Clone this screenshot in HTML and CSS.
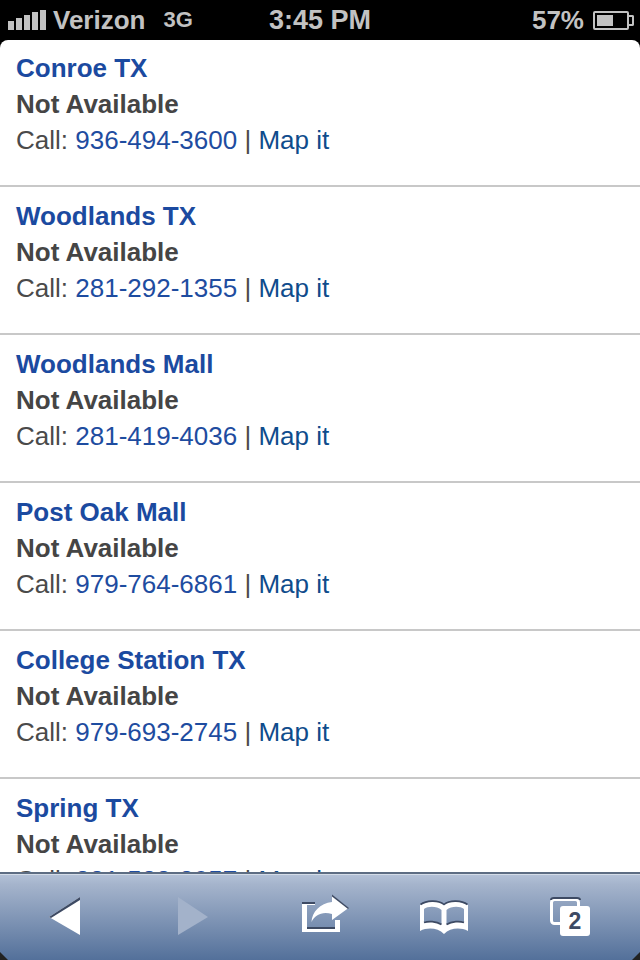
FILE: index.html
```html
<!DOCTYPE html>
<html lang="en">
<head>
  <meta charset="UTF-8" />
  <title>Store Locations</title>
  <link rel="stylesheet" href="styles.css">
</head>
<body>
  <div class="phone">
    <div class="status-bar">
      <div class="status-left">
        <div class="signal"><span class="b1"></span><span class="b2"></span><span class="b3"></span><span class="b4"></span><span class="b5"></span></div>
        <span class="carrier">Verizon</span>
        <span class="network">3G</span>
      </div>
      <div class="clock">3:45 PM</div>
      <div class="status-right">
        <span>57%</span>
        <div class="battery"><div class="battery-level"></div></div>
        <div class="battery-nub"></div>
      </div>
    </div>

    <div class="stores">
      <div class="store">
        <a class="store-name" href="#">Conroe TX</a>
        <div class="store-status">Not Available</div>
        <div class="store-call">Call: <a class="phone-link" href="#">936-494-3600</a> | <a class="map-link" href="#">Map it</a></div>
      </div>
      <div class="store">
        <a class="store-name" href="#">Woodlands TX</a>
        <div class="store-status">Not Available</div>
        <div class="store-call">Call: <a class="phone-link" href="#">281-292-1355</a> | <a class="map-link" href="#">Map it</a></div>
      </div>
      <div class="store">
        <a class="store-name" href="#">Woodlands Mall</a>
        <div class="store-status">Not Available</div>
        <div class="store-call">Call: <a class="phone-link" href="#">281-419-4036</a> | <a class="map-link" href="#">Map it</a></div>
      </div>
      <div class="store">
        <a class="store-name" href="#">Post Oak Mall</a>
        <div class="store-status">Not Available</div>
        <div class="store-call">Call: <a class="phone-link" href="#">979-764-6861</a> | <a class="map-link" href="#">Map it</a></div>
      </div>
      <div class="store">
        <a class="store-name" href="#">College Station TX</a>
        <div class="store-status">Not Available</div>
        <div class="store-call">Call: <a class="phone-link" href="#">979-693-2745</a> | <a class="map-link" href="#">Map it</a></div>
      </div>
      <div class="store">
        <a class="store-name" href="#">Spring TX</a>
        <div class="store-status">Not Available</div>
        <div class="store-call">Call: <a class="phone-link" href="#">281-528-8957</a> | <a class="map-link" href="#">Map it</a></div>
      </div>
    </div>

    <div class="toolbar">
      <!-- each icon is drawn in page coordinates, the viewBox picks out its cell -->
      <svg class="tool" viewBox="0 872 128 88">
        <path d="M49 917 80 897V935Z" fill="#fff"/>
        <path d="M49 917 80 897V900L51 918Z" fill="#3d4a63"/>
      </svg>
      <svg class="tool" viewBox="128 872 128 88">
        <path d="M178 897 208 917 178 935Z" fill="#a3b2ca"/>
      </svg>
      <svg class="tool" viewBox="256 872 128 88">
        <path d="M302 902H315V905H307V927H335V920H340V932H302Z" fill="#fff"/>
        <path d="M302 902H315V904H302ZM307 927H335V929H307Z" fill="#3d4a63"/>
        <path d="M332 895 348.500 908 332 920V914C322 911 315 915 311.500 922 312 912 320 903 332 902Z" fill="#fff"/>
        <path d="M332 894.500 349 908 348 909 332 896.500Z" fill="#3d4a63"/>
      </svg>
      <svg class="tool" viewBox="384 872 128 88">
        <path fill-rule="evenodd" fill="#fff" d="M444 905C438 900 426 901 420 905V931C428 927 438 928 444 934 450 928 460 927 468 931V905C462 901 450 900 444 905ZM424 909C428 906 437 906 441.500 910V924C436 921 428 921 424 922ZM446.500 910C451 906 460 906 464 909V922C460 921 452 921 446.500 924Z"/>
        <path d="M420.500 904.500C426 900.500 438 899.500 444 904.500 450 899.500 462 900.500 467.500 904.500" fill="none" stroke="#3d4a63" stroke-width="1.600"/>
        <path d="M424 922.500C428 921 436 921 441.500 924.500M446.500 924.500C452 921 460 921 464 922.500" fill="none" stroke="#3d4a63" stroke-width="1.800"/>
      </svg>
      <svg class="tool" viewBox="512 872 128 88">
        <rect x="551.500" y="899.500" width="27" height="24" rx="3" fill="none" stroke="#fff" stroke-width="3"/>
        <path d="M551 900C551 898.500 552 898 554 898H577C579 898 580 899 580 900" fill="none" stroke="#3d4a63" stroke-width="2"/>
        <rect x="560" y="906" width="30" height="30" rx="3" fill="#fff"/>
        <text class="tab-count" x="575" y="929" text-anchor="middle">2</text>
      </svg>
      <div class="corner corner-left"></div>
      <div class="corner corner-right"></div>
    </div>
  </div>
</body>
</html>
```

FILE: styles.css
```css
body {
  margin: 0;
  background: #000;
  font-family: "Liberation Sans", Arial, sans-serif;
}

a {
  text-decoration: none;
}

.phone {
  width: 640px;
  height: 960px;
  display: flex;
  flex-direction: column;
  overflow: hidden;
}

/* status bar */
.status-bar {
  flex: none;
  height: 40px;
  display: grid;
  grid-template-columns: 1fr auto 1fr;
  align-items: center;
  background: #000;
  color: #c2c2c2;
  font-size: 26px;
  font-weight: bold;
}

.status-left {
  display: flex;
  align-items: center;
  padding-left: 8px;
}

.signal {
  display: flex;
  align-items: flex-end;
  gap: 2px;
  height: 20px;
  margin-right: 7px;
}

.signal span {
  width: 6px;
  background: #c2c2c2;
}

.b1 { height: 9px; }
.b2 { height: 12px; }
.b3 { height: 15px; }
.b4 { height: 18px; }
.b5 { height: 20px; }

.network {
  margin-left: 18px;
  font-size: 22px;
}

.clock {
  font-size: 27px;
}

.status-right {
  display: flex;
  align-items: center;
  justify-content: flex-end;
  padding-right: 6px;
}

.battery {
  width: 28px;
  height: 11px;
  margin-left: 9px;
  padding: 2px;
  border: 2px solid #c2c2c2;
  border-radius: 2px;
}

.battery-level {
  width: 16px;
  height: 100%;
  background: #c2c2c2;
}

.battery-nub {
  width: 3px;
  height: 7px;
  border: 2px solid #c2c2c2;
  border-left: none;
  border-radius: 0 2px 2px 0;
}

/* store list */
.stores {
  flex: 1;
  min-height: 0;
  overflow: hidden;
  background: #fff;
  border-radius: 8px 8px 0 0;
}

.store {
  padding: 11px 16px 27px;
  border-bottom: 2px solid #c8c8c8;
  font-size: 26px;
  line-height: 36px;
  color: #4a4a4a;
}

.store:first-child {
  padding-top: 10px;
}

.store-name {
  display: block;
  font-weight: bold;
  color: #1b4aa0;
}

.store-status {
  font-weight: bold;
  color: #454545;
}

.phone-link {
  color: #1e4ca0;
}

.map-link {
  color: #0f4c8c;
}

/* bottom toolbar */
.toolbar {
  position: relative;
  flex: none;
  height: 88px;
  box-sizing: border-box;
  display: grid;
  grid-template-columns: repeat(5, 128px);
  border-top: 2px solid #5d6d83;
  background: linear-gradient(#b4c2d8, #a5b4cc 12%, #53709a);
  box-shadow: inset 0 1px 0 #d4dce8;
}

.tool {
  width: 128px;
  height: 88px;
  margin-top: -2px;
}

.tab-count {
  font-size: 23px;
  font-weight: bold;
  fill: #3d4a63;
}

.corner {
  position: absolute;
  bottom: 0;
  width: 8px;
  height: 8px;
  background: #222;
}

.corner-left {
  left: 0;
  clip-path: polygon(0 0, 100% 100%, 0 100%);
}

.corner-right {
  right: 0;
  clip-path: polygon(100% 0, 100% 100%, 0 100%);
}
```
